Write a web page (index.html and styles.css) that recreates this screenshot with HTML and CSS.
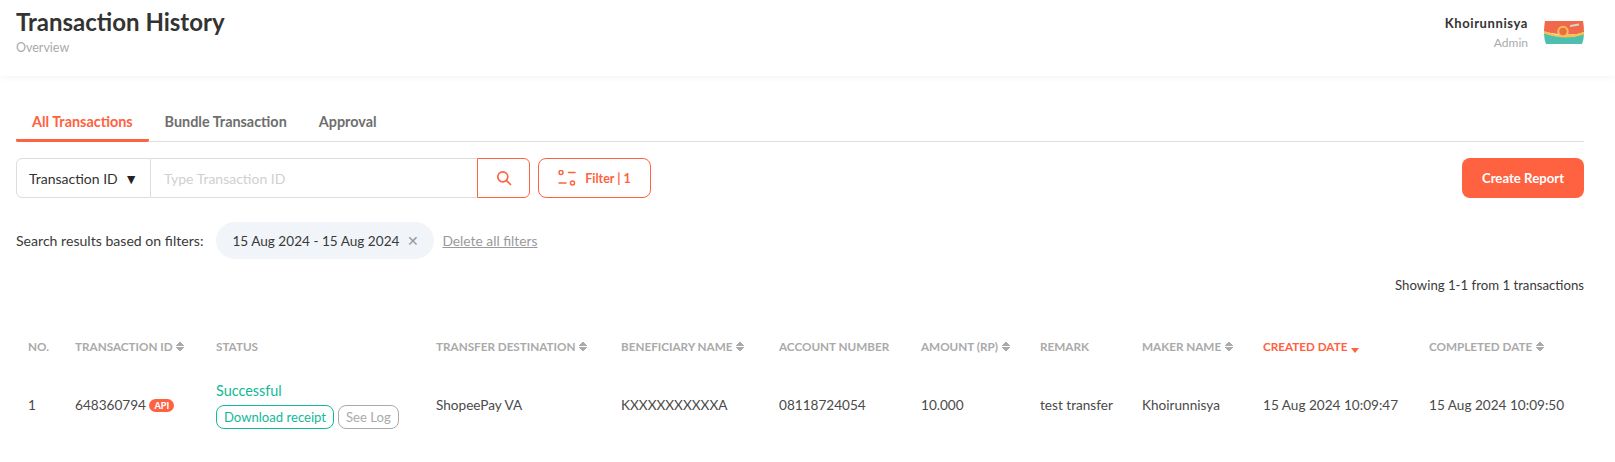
FILE: index.html
```html
<!DOCTYPE html>
<html lang="en">
<head>
    <meta charset="UTF-8">
    <meta name="viewport" content="width=device-width, initial-scale=1.0">
    <title>Transaction History</title>
    <link rel="stylesheet" href="styles.css">
</head>
<body>
    <div class="header">
        <div>
            <h1>Transaction History</h1>
            <p class="subtitle">Overview</p>
        </div>
        <div class="user">
            <div class="user-info">
                <div class="user-name">Khoirunnisya</div>
                <div class="user-role">Admin</div>
            </div>
            <svg class="avatar" width="40" height="23" viewBox="0 0 40 23">
                <path d="M1 0H39Q40 5 40 11Q30 16 0 11Q0 5 1 0Z" fill="#f0694a"/>
                <path d="M0 12Q22 20 40 12Q40 18 38 23H2Q0 18 0 12Z" fill="#4dbfae"/>
                <path d="M0 10Q20 18 40 11V13.5Q22 20 0 12.5Z" fill="#f7c04f"/>
                <circle cx="19" cy="10.5" r="4.7" fill="#f0694a" stroke="#f7c04f" stroke-width="2"/>
                <path d="M26 4L35 2.5V4.5L26 6Z" fill="#d9d4c8"/>
            </svg>
        </div>
    </div>

    <div class="content">
        <div class="tabs">
            <a class="tab active">All Transactions</a>
            <a class="tab">Bundle Transaction</a>
            <a class="tab">Approval</a>
        </div>

        <div class="toolbar">
            <div class="search-select">Transaction ID <span class="caret">▼</span></div>
            <div class="search-input">Type Transaction ID</div>
            <button class="btn-search">
                <svg width="16" height="16" viewBox="0 0 16 16" fill="none" stroke="#ff6240" stroke-width="1.7" stroke-linecap="round">
                    <circle cx="6.8" cy="6.8" r="5"/>
                    <path d="M10.6 10.6L14.5 14.5"/>
                </svg>
            </button>
            <button class="btn-filter">
                <svg width="18" height="16" viewBox="0 0 18 16" fill="none" stroke="#ff6240" stroke-width="1.5" stroke-linecap="round">
                    <circle cx="3" cy="2.5" r="2"/>
                    <path d="M10.5 2.5H17"/>
                    <circle cx="14.5" cy="13" r="2"/>
                    <path d="M1 13H8"/>
                </svg>
                Filter | 1
            </button>
            <button class="btn-report">Create Report</button>
        </div>

        <div class="filters">
            <span>Search results based on filters:</span>
            <span class="chip">15 Aug 2024 - 15 Aug 2024 <span class="chip-close">✕</span></span>
            <a class="clear-link">Delete all filters</a>
        </div>

        <div class="showing">Showing 1-1 from 1 transactions</div>

        <table class="table">
            <thead>
                <tr>
                    <th class="c-no">NO.</th>
                    <th class="c-id">TRANSACTION ID <span class="sort"></span></th>
                    <th class="c-status">STATUS</th>
                    <th class="c-dest">TRANSFER DESTINATION <span class="sort"></span></th>
                    <th class="c-benef">BENEFICIARY NAME <span class="sort"></span></th>
                    <th class="c-acct">ACCOUNT NUMBER</th>
                    <th class="c-amount">AMOUNT (RP) <span class="sort"></span></th>
                    <th class="c-remark">REMARK</th>
                    <th class="c-maker">MAKER NAME <span class="sort"></span></th>
                    <th class="c-created active">CREATED DATE <span class="sort-down"></span></th>
                    <th class="c-done">COMPLETED DATE <span class="sort"></span></th>
                </tr>
            </thead>
            <tbody>
                <tr>
                    <td>1</td>
                    <td>648360794 <span class="badge">API</span></td>
                    <td>
                        <div class="status-ok">Successful</div>
                        <div class="status-actions">
                            <a class="btn-receipt">Download receipt</a>
                            <a class="btn-log">See Log</a>
                        </div>
                    </td>
                    <td>ShopeePay VA</td>
                    <td>KXXXXXXXXXXA</td>
                    <td>08118724054</td>
                    <td>10.000</td>
                    <td>test transfer</td>
                    <td>Khoirunnisya</td>
                    <td>15 Aug 2024 10:09:47</td>
                    <td>15 Aug 2024 10:09:50</td>
                </tr>
            </tbody>
        </table>
    </div>
</body>
</html>
```

FILE: styles.css
```css
* {
    margin: 0;
    padding: 0;
    box-sizing: border-box;
}

body {
    font-family: 'Lato', 'Open Sans', sans-serif;
    background: white;
    color: #3a3a3a;
    font-size: 14px;
    overflow: hidden;
}

.header {
    height: 76px;
    padding: 8px 31px 0 16px;
    display: flex;
    justify-content: space-between;
    align-items: flex-start;
    box-shadow: 0 2px 8px rgba(0,0,0,0.04);
}

.header h1 {
    font-size: 24px;
    line-height: 28px;
    font-weight: 700;
    color: #333;
}

.subtitle {
    font-size: 12.5px;
    line-height: 16px;
    margin-top: 4px;
    color: #aaa;
}

.user {
    display: flex;
    align-items: flex-start;
    gap: 16px;
    padding-top: 7px;
}

.user-info {
    text-align: right;
}

.user-name {
    font-size: 13px;
    line-height: 17px;
    font-weight: 700;
    letter-spacing: 0.6px;
    color: #333;
}

.user-role {
    font-size: 12px;
    line-height: 16px;
    margin-top: 3px;
    color: #aaa;
}

.avatar {
    margin-top: 6px;
}

.content {
    padding: 28px 31px 0 16px;
}

.tabs {
    display: flex;
    height: 38px;
    border-bottom: 1px solid #ddd;
}

.tab {
    height: 38px;
    padding: 9px 16px 0;
    font-size: 14.4px;
    line-height: 17px;
    font-weight: 700;
    color: #6e6e6e;
}

.tab.active {
    color: #ff6240;
    border-bottom: 3px solid #ff6240;
    border-radius: 2px;
}

.toolbar {
    display: flex;
    align-items: stretch;
    height: 40px;
    margin-top: 16px;
}

.search-select {
    width: 135px;
    padding: 0 12px;
    display: flex;
    align-items: center;
    justify-content: space-between;
    border: 1px solid #ddd;
    border-radius: 6px 0 0 6px;
    font-size: 14px;
    color: #333;
}

.caret {
    font-size: 14px;
    color: #222;
}

.search-input {
    width: 326px;
    padding: 0 13px;
    display: flex;
    align-items: center;
    border: 1px solid #ddd;
    border-left: none;
    border-right: none;
    font-size: 14px;
    color: #d0d0d0;
}

.btn-search {
    width: 53px;
    display: flex;
    align-items: center;
    justify-content: center;
    background: white;
    border: 1px solid #ff6240;
    border-radius: 0 6px 6px 0;
}

.btn-filter {
    width: 113px;
    margin-left: 8px;
    display: flex;
    align-items: center;
    justify-content: center;
    gap: 9px;
    background: white;
    border: 1px solid #ff6240;
    border-radius: 8px;
    color: #ff6240;
    font-family: inherit;
    font-size: 12.5px;
    font-weight: 700;
}

.btn-report {
    width: 122px;
    margin-left: auto;
    background: #ff6240;
    border: none;
    border-radius: 8px;
    color: white;
    font-family: inherit;
    font-size: 13.2px;
    font-weight: 700;
}

.filters {
    display: flex;
    align-items: center;
    margin-top: 24px;
    height: 37px;
    font-size: 14.1px;
    color: #3a3a3a;
}

.chip {
    margin-left: 13px;
    height: 37px;
    padding: 0 15px 0 16px;
    display: flex;
    align-items: center;
    gap: 8px;
    background: #f1f5f9;
    border-radius: 19px;
    font-size: 13.6px;
}

.chip-close {
    font-size: 14px;
    color: #999;
}

.clear-link {
    margin-left: 8px;
    font-size: 13.8px;
    color: #9a9a9a;
    text-decoration: underline;
}

.showing {
    margin-top: 17px;
    text-align: right;
    font-size: 13.2px;
    line-height: 18px;
}

.table {
    width: 1568px;
    margin-top: 30px;
    table-layout: fixed;
    border-collapse: collapse;
    font-size: 13.6px;
}

.table th {
    height: 44px;
    padding: 0 12px;
    text-align: left;
    font-size: 11.7px;
    font-weight: 700;
    color: #aaa;
    white-space: nowrap;
}

.table th.active {
    color: #ff6240;
}

.table td {
    height: 74px;
    padding: 0 12px;
    color: #4a4a4a;
    white-space: nowrap;
}

.c-no { width: 47px; }
.c-id { width: 141px; }
.c-status { width: 220px; }
.c-dest { width: 185px; }
.c-benef { width: 158px; }
.c-acct { width: 142px; }
.c-amount { width: 119px; }
.c-remark { width: 102px; }
.c-maker { width: 121px; }
.c-created { width: 166px; }
.c-done { width: 167px; }

.sort {
    display: inline-block;
    width: 8px;
    height: 11px;
    margin-left: 1px;
    vertical-align: -1px;
    background:
        linear-gradient(to top left, #aaa 50%, transparent 51%) left top / 4px 5px no-repeat,
        linear-gradient(to top right, #aaa 50%, transparent 51%) right top / 4px 5px no-repeat,
        linear-gradient(to bottom left, #aaa 50%, transparent 51%) left bottom / 4px 5px no-repeat,
        linear-gradient(to bottom right, #aaa 50%, transparent 51%) right bottom / 4px 5px no-repeat;
}

.sort-down {
    display: inline-block;
    width: 0;
    height: 0;
    margin-left: 1px;
    vertical-align: -2px;
    border-left: 4px solid transparent;
    border-right: 4px solid transparent;
    border-top: 5px solid #ff6240;
}

.badge {
    display: inline-block;
    padding: 0 5px;
    background: #ff6240;
    border-radius: 7px;
    color: white;
    font-size: 9px;
    line-height: 13px;
    font-weight: 900;
    vertical-align: 1px;
}

.status-ok {
    color: #12b996;
    font-size: 14.4px;
    line-height: 17px;
}

.status-actions {
    display: flex;
    gap: 4px;
    margin-top: 6px;
}

.btn-receipt,
.btn-log {
    height: 24px;
    padding: 0 7px;
    display: flex;
    align-items: center;
    border-radius: 8px;
    font-size: 13.1px;
}

.btn-receipt {
    border: 1px solid #12b996;
    color: #12b996;
}

.btn-log {
    border: 1px solid #aaa;
    color: #aaa;
}
```
